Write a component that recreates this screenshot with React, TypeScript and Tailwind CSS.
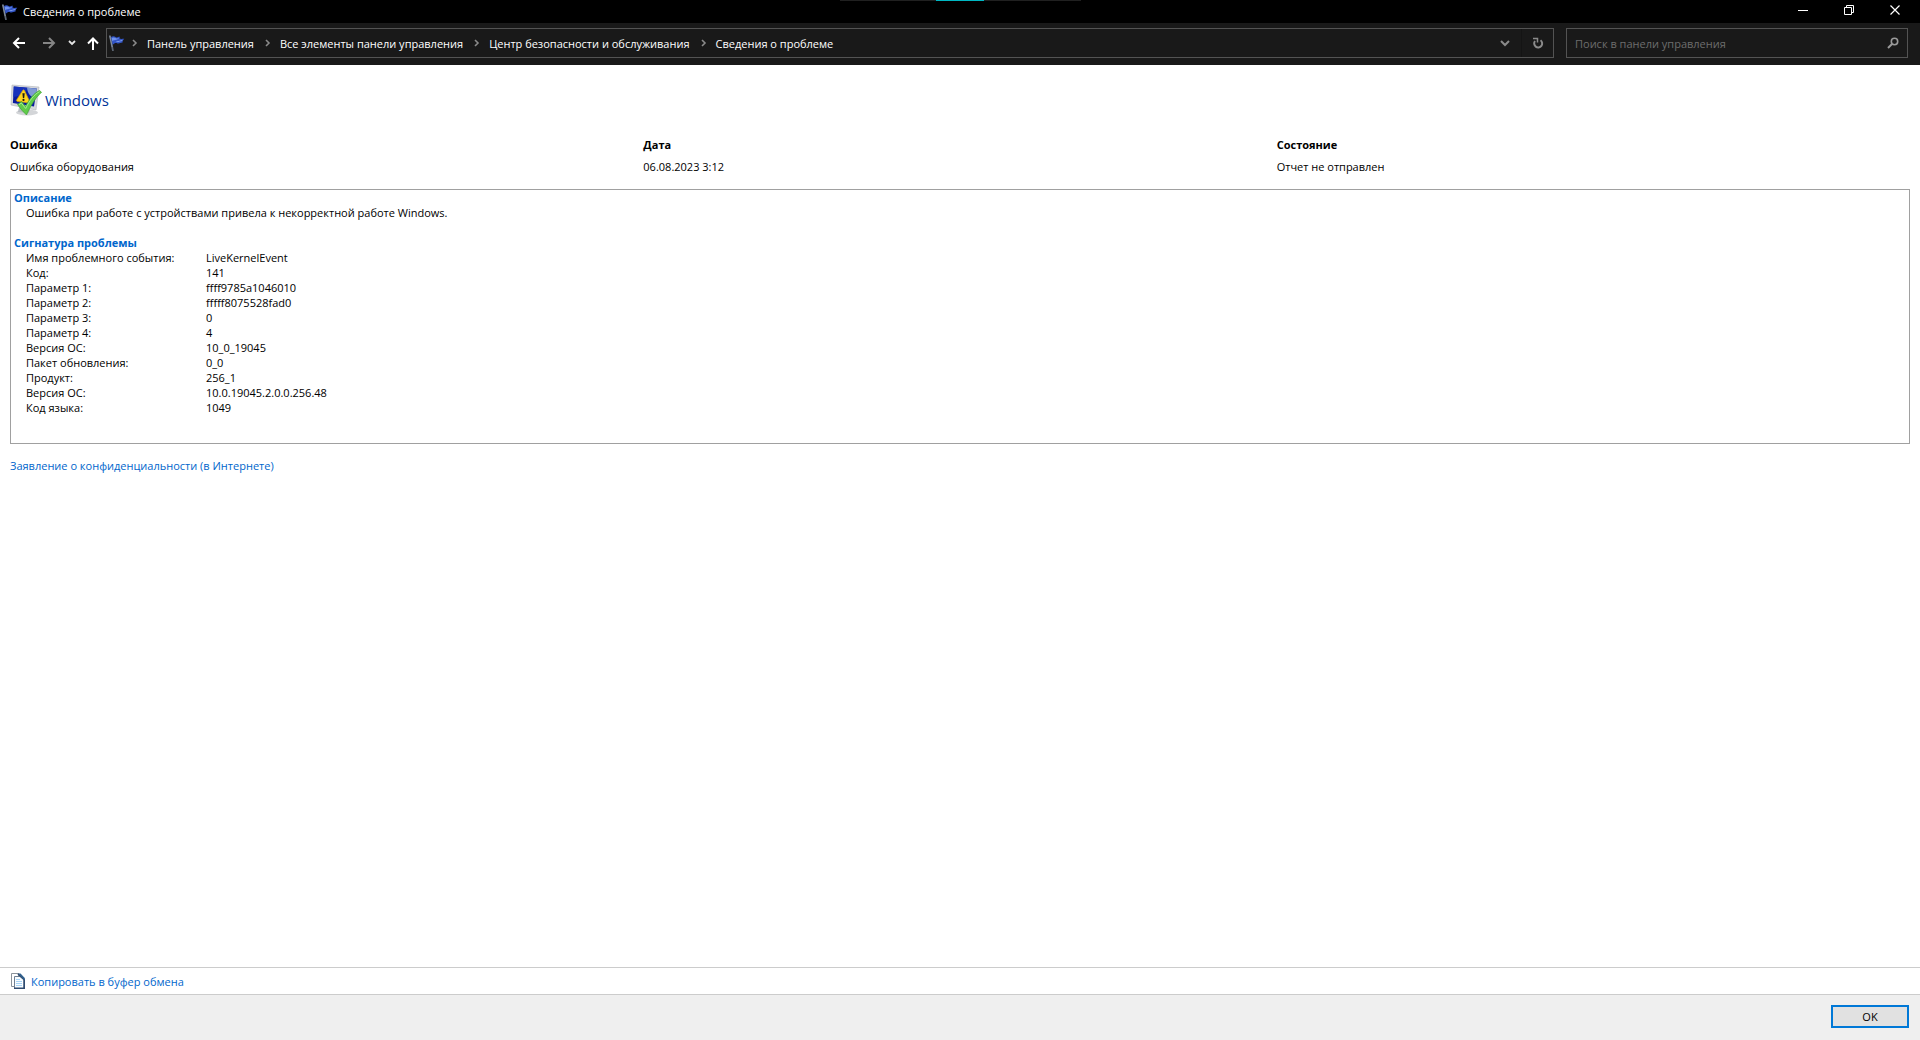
import type { ReactNode } from "react";

const breadcrumbs = [
  "Панель управления",
  "Все элементы панели управления",
  "Центр безопасности и обслуживания",
  "Сведения о проблеме",
];

const signature = [
  ["Имя проблемного события:", "LiveKernelEvent"],
  ["Код:", "141"],
  ["Параметр 1:", "ffff9785a1046010"],
  ["Параметр 2:", "fffff8075528fad0"],
  ["Параметр 3:", "0"],
  ["Параметр 4:", "4"],
  ["Версия ОС:", "10_0_19045"],
  ["Пакет обновления:", "0_0"],
  ["Продукт:", "256_1"],
  ["Версия ОС:", "10.0.19045.2.0.0.256.48"],
  ["Код языка:", "1049"],
];

const FlagIcon = () => (
  <svg width="16" height="16" viewBox="0 0 16 16" className="shrink-0">
    <path d="M1 1.2 3.9 15.4" stroke="#5d6673" strokeWidth="1.8" strokeLinecap="round" />
    <path d="M.8.8 3.2 12" stroke="#9aa5b3" strokeWidth=".7" />
    <path d="M2 2C4 .4 5.500 1.400 7 2.200 8.500 3 9.500 1.600 10.800 1.800L10.500 3.500C12 4.400 14 3.600 15.300 3.800 14 5 13.400 6 13.600 7.600 12 7.300 10.500 9 8.500 8.400 6.600 7.800 5.600 8 3.600 10Z" fill="#3355c4" />
    <path d="M2.600 3C4.400 1.800 5.600 2.600 7 3.300 8.300 3.900 9.200 3.300 10 3 9 5 6 4.600 3 6Z" fill="#6f92ee" />
    <path d="M7.500 6.500C9.500 7.200 11.500 5.500 13.400 5.400" stroke="#8aa8f5" strokeWidth=".8" fill="none" />
  </svg>
);

const Chevron = () => (
  <svg width="22" height="8" viewBox="0 0 22 8" className="shrink-0" fill="none">
    <path d="M8 1 11 4 8 7" stroke="#8a8a8a" strokeWidth="1.6" />
  </svg>
);

const ReportIcon = () => (
  <svg width="32" height="32" viewBox="0 0 32 32" className="shrink-0">
    <ellipse cx="17" cy="28.500" rx="11" ry="3" fill="#d3d5d8" />
    <path d="M9 23 20 25 19 29 8 28Z" fill="#b9bdc3" />
    <path d="M2 1 29 3 26 26 1 21Z" fill="#d6d8dc" stroke="#b2b6bc" strokeWidth=".6" />
    <path d="M3.800 2.600 26.800 4.500 24 22.600 2.900 18.900Z" fill="#0a1c9e" />
    <path d="M17 3.700 26.800 4.500 25.500 14C20 13 17.500 9 17 3.700Z" fill="#7f9ad4" />
    <path d="M3.800 2.600 17 3.700C17.500 8 12 12 3.300 13Z" fill="#1732bb" />
    <path d="M12.800 6.300Q13.700 5.300 14.500 6.500L19.800 17.700Q20 19 18.800 18.900L7 17.300Q6 16.800 6.600 15.900Z" fill="#ffd51e" stroke="#d59a08" strokeWidth=".7" />
    <path d="M12.400 9.300H14.700L14.200 14H12.900Z" fill="#1f1b10" />
    <circle cx="13.500" cy="15.900" r="1.100" fill="#1f1b10" />
    <path d="M7.500 20.500 11.500 17.500 15.500 22.500C19 15.500 23.500 9.500 29.500 6.500L31.500 8.200C25 14 20.500 22 16.500 31Q12 27 7.500 20.500Z" fill="#5fcc49" stroke="#3da02f" strokeWidth=".7" />
    <path d="M9 20.700 11.300 19 15.700 24.500C19.500 16.500 24 10.500 29.500 7.700" stroke="#a5eb91" strokeWidth="1" fill="none" />
  </svg>
);

const CopyIcon = () => (
  <svg width="16" height="16" viewBox="0 0 16 16" className="shrink-0" fill="none">
    <path d="M1.500 .5H8.500V3M1.500 .5V13.500H4" stroke="#8b939b" />
    <path d="M4.500 3.500H10L14 7V15.500H4.500Z" fill="#f8fcff" stroke="#6e7f92" />
    <path d="M8 .8 14.200 6.500V15.200H4" stroke="#2e4b70" strokeWidth="1.600" />
    <path d="M8.500 .5H10.500L14.800 5V7.500Z" fill="#2e608e" />
    <path d="M6 6.500H10M6 8.500H12M6 10.500H12M6 12.500H12" stroke="#a6d3f6" />
  </svg>
);

const CaptionButton = ({ label, children }: { label: string; children: ReactNode }) => (
  <button aria-label={label} className="flex h-5 w-[46px] items-center justify-center hover:bg-[#333]">
    <svg width="10" height="10" viewBox="0 0 10 10" fill="none" stroke="#fff">
      {children}
    </svg>
  </button>
);

const TitleBar = () => (
  <header className="relative flex h-[23px] items-start justify-between bg-black text-white">
    <div className="absolute inset-x-0 top-0 flex justify-center">
      <div className="flex h-px w-[241px] justify-center bg-[#202020]">
        <div className="h-px w-12 bg-[#00b7c3]"></div>
      </div>
    </div>
    <div className="flex h-[23px] items-center gap-[5px] pl-[2px]">
      <FlagIcon />
      <h1>Сведения о проблеме</h1>
    </div>
    <div className="z-10 flex pr-[2px]">
      <CaptionButton label="Свернуть">
        <path d="M0 5.500H10" />
      </CaptionButton>
      <CaptionButton label="Свернуть в окно">
        <path d="M.5 2.500H7.500V9.500H.5ZM2.500 2.500V.5H9.500V7.500H7.500" />
      </CaptionButton>
      <CaptionButton label="Закрыть">
        <path d="M.5 .5 9.500 9.500M9.500 .5 .5 9.500" strokeWidth="1.200" />
      </CaptionButton>
    </div>
  </header>
);

const Toolbar = () => (
  <div className="flex h-[42px] items-center bg-[#191919] pr-3 pb-[2px] text-white">
    <nav aria-label="Навигация" className="flex w-[106px] shrink-0 items-center pl-3">
      <button aria-label="Назад">
        <svg width="14" height="14" viewBox="0 0 14 14" fill="none" stroke="#fff" strokeWidth="2">
          <path d="M13 7H2M7 2 2 7 7 12" />
        </svg>
      </button>
      <button aria-label="Вперед" className="ml-4">
        <svg width="14" height="14" viewBox="0 0 14 14" fill="none" stroke="#858585" strokeWidth="2">
          <path d="M1 7H12M7 2 12 7 7 12" />
        </svg>
      </button>
      <button aria-label="Последние расположения" className="ml-3">
        <svg width="8" height="6" viewBox="0 0 8 6" fill="none" stroke="#e5e5e5" strokeWidth="1.800">
          <path d="M1 1 4 4 7 1" />
        </svg>
      </button>
      <button aria-label="Вверх" className="ml-[10px]">
        <svg width="14" height="14" viewBox="0 0 14 14" fill="none" stroke="#fff" strokeWidth="2">
          <path d="M7 14V3M2 7.500 7 2.500 12 7.500" />
        </svg>
      </button>
    </nav>
    <div className="flex h-[30px] min-w-0 flex-1 items-center border border-[#535353] pl-[2px]">
      <FlagIcon />
      <ol className="flex min-w-0 flex-1 items-center overflow-hidden whitespace-nowrap">
        {breadcrumbs.map((crumb) => (
          <li key={crumb} className="flex items-center pr-1">
            <Chevron />
            <a href="#">{crumb}</a>
          </li>
        ))}
      </ol>
      <button aria-label="Предыдущие расположения" className="flex h-7 w-8 items-center justify-center">
        <svg width="10" height="7" viewBox="0 0 10 7" fill="none" stroke="#8a8a8a" strokeWidth="2">
          <path d="M1 1 5 5 9 1" />
        </svg>
      </button>
      <button aria-label="Обновить" className="flex h-7 w-8 items-center justify-center border-l border-[#141414]">
        <svg width="12" height="12" viewBox="0 0 12 12" fill="none" stroke="#8a8a8a">
          <path d="M8.500 3.200A4 4 0 1 1 3 4" strokeWidth="2" />
          <path d="M1 1.500H5.500V5.500" strokeWidth="1.500" />
        </svg>
      </button>
    </div>
    <label className="ml-3 flex h-[30px] w-[342px] items-center border border-[#535353] px-2">
      <input
        type="search"
        aria-label="Поиск в панели управления"
        placeholder="Поиск в панели управления"
        className="min-w-0 flex-1 bg-transparent outline-none placeholder:text-[#6d6d6d]"
      />
      <svg width="12" height="12" viewBox="0 0 12 12" fill="none" stroke="#9a9a9a">
        <circle cx="7.500" cy="4.500" r="3.200" strokeWidth="1.600" />
        <path d="M5 7 1 11" strokeWidth="2" />
      </svg>
    </label>
  </div>
);

const App = () => {
  return (
    <div className="flex min-h-screen flex-col bg-white font-['Open_Sans','Noto_Sans',sans-serif] text-[11px] leading-[15px] text-black">
      <TitleBar />
      <Toolbar />

      <main className="flex-1 px-[10px] pt-[19px]">
        <div className="flex items-center gap-[3px]">
          <ReportIcon />
          <h2 className="text-[15px] leading-5 text-[#003399]">Windows</h2>
        </div>

        <table className="mt-[17px] w-full table-fixed text-left">
          <thead>
            <tr className="h-[22px]">
              <th className="p-0">Ошибка</th>
              <th className="p-0">Дата</th>
              <th className="p-0">Состояние</th>
            </tr>
          </thead>
          <tbody>
            <tr className="h-[22px]">
              <td className="p-0">Ошибка оборудования</td>
              <td className="p-0">06.08.2023 3:12</td>
              <td className="p-0">Отчет не отправлен</td>
            </tr>
          </tbody>
        </table>

        <section className="mt-3 border border-[#a0a0a0] px-[3px] pb-7">
          <h3 className="font-bold text-[#0066cc]">Описание</h3>
          <p className="pl-3">Ошибка при работе с устройствами привела к некорректной работе Windows.</p>
          <h3 className="mt-[15px] font-bold text-[#0066cc]">Сигнатура проблемы</h3>
          <table className="ml-3 text-left">
            <tbody>
              {signature.map(([name, value], i) => (
                <tr key={i}>
                  <th className="w-[180px] p-0 font-normal">{name}</th>
                  <td className="p-0">{value}</td>
                </tr>
              ))}
            </tbody>
          </table>
        </section>

        <a href="#" className="mt-[14px] inline-block text-[#0066cc]">
          Заявление о конфиденциальности (в Интернете)
        </a>
      </main>

      <div className="flex h-7 items-center border-y border-[#cccccc] px-[10px]">
        <button className="flex items-center gap-[5px] text-[#0066cc]">
          <CopyIcon />
          Копировать в буфер обмена
        </button>
      </div>
      <footer className="flex h-[45px] items-start justify-end bg-[#efefef] px-[11px] pt-[10px]">
        <button className="h-[23px] w-[78px] border-2 border-[#0078d7] bg-[#e1e1e1]">OK</button>
      </footer>
    </div>
  );
};

export default App;
